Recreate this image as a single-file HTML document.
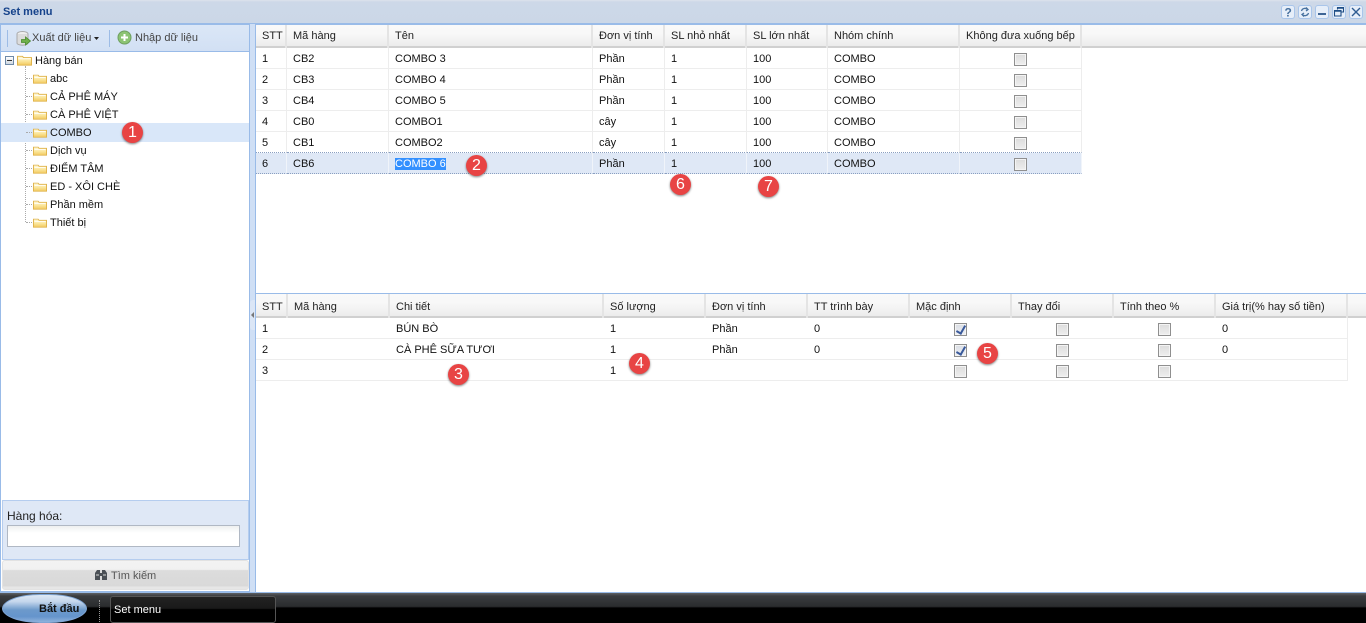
<!DOCTYPE html>
<html lang="vi"><head><meta charset="utf-8"><title>Set menu</title>
<style>
*{box-sizing:border-box}
html,body{margin:0;padding:0}
body{width:1366px;height:623px;position:relative;overflow:hidden;background:#dfe8f6;font:11px "Liberation Sans",Arial,sans-serif;color:#111}
.a{position:absolute}
.t{position:absolute;white-space:nowrap;line-height:14px}
#title{left:0;top:0;width:1366px;height:24px;background:linear-gradient(#dde3ec 0,#cdd8e8 2px,#cbd7e7 100%);border-bottom:1px solid #99bbe8}
#title b{position:absolute;left:3px;top:5px;font-size:11px;color:#15428b;line-height:14px}
.wb{position:absolute;top:5px;width:14px;height:14px;border:1px solid #a9c5ea;border-radius:3px;background:#e6eef9}
.wb svg{position:absolute;left:0;top:0}
#left{left:0;top:24px;width:250px;height:568px;border:1px solid #99bbe8;background:#fff}
#tb{left:0;top:0;width:248px;height:27px;background:linear-gradient(#dbe7f7,#d2e0f4);border-bottom:1px solid #99bbe8}
.sep{position:absolute;top:5px;width:1px;height:17px;background:#9dbce6}
#tree{left:0;top:27px;width:248px;height:448px;background:#fff}
.row{position:absolute;left:0;width:248px;height:18px}
.row.s{background:#d9e7f9;box-shadow:0 -1px 0 #d9e7f9}
.row span{position:absolute;left:49px;top:2px;line-height:14px;font-size:11px}
.fo{position:absolute;left:32px;top:4px}
.dot{position:absolute;border-left:1px dotted #aaa}
.doth{position:absolute;left:25px;top:8px;width:8px;border-top:1px dotted #aaa}
#search{left:1px;top:475px;width:247px;height:60px;background:#dfe8f6;border:1px solid #b5cdef;position:absolute}
#search label{position:absolute;left:4px;top:8px;font-size:12px;line-height:14px;color:#222}
#search i{position:absolute;left:4px;top:24px;width:233px;height:22px;background:linear-gradient(#eef0f0,#fff 7px);border:1px solid #b0b8c4}
#btn{left:1px;top:535px;width:247px;height:30px;border:1px solid #e2e2e2;border-radius:3px;background:linear-gradient(#f3f3f3 0,#f1f1f1 30%,#dcdcdc 34%,#d9d9d9 90%,#e6e6e6 92%,#e6e6e6 100%)}
#btn span{position:absolute;left:108px;top:8px;color:#555;line-height:14px}
#spl{left:250px;top:24px;width:6px;height:568px;background:#cfdff5}
#r1{left:255px;top:24px;width:1111px;height:269px;background:#fff;border-left:1px solid #99bbe8;border-top:1px solid #99bbe8}
#r2{left:255px;top:293px;width:1111px;height:299px;background:#fff;border:1px solid #99bbe8;border-right:0;border-bottom:0}
.hd{position:absolute;left:0;top:0;width:1110px;background:linear-gradient(#f9f9f9 0,#f8f8f8 40%,#ececec 100%);border-bottom:2px solid #d0d0d0}
table{position:absolute;left:0;top:0;border-collapse:separate;border-spacing:0;table-layout:fixed}
th,td{padding:0 0 0 6px;font-size:11px;font-weight:normal;text-align:left;white-space:nowrap;overflow:hidden;color:#111}
th{border-right:2px solid #e4e4e4;color:#222}
#r1 th{padding-bottom:2px}
#r2 th{padding-top:1px}
td{height:21px;padding-top:1px;border-right:1px solid #ededed;border-bottom:1px solid #ededed}
#r2 td{border-right:0}
#r2 td:last-child{border-right:1px solid #ededed}
td.c{padding:0}
tr.pre td{border-bottom:1px dotted #8a9fc0}
tr.sel td{background:#dfe8f6;border-bottom:1px dotted #8a9fc0;border-right-color:#f0f4fa}
.sl{background:#3390ff;color:#fff}
.cb{display:block;margin:0 auto;width:13px;height:13px;border:1px solid #8f8f8f;background:linear-gradient(#dcdcdc,#eeeeee);box-shadow:inset 0 0 0 1px #f4f4f4;position:relative;top:1px}
#r2 .cb{left:-1px}
.cb.k{background:linear-gradient(#d9dde4,#eef0f4)}
.cb.k::after{content:"";position:absolute;left:3px;top:0;width:4px;height:8px;border:solid #3a5a9b;border-width:0 2px 2px 0;transform:rotate(30deg)}
.n{position:absolute;width:21px;height:21px;border-radius:50%;background:#e84444;color:#fff;text-align:center;font-size:16px;line-height:21px;box-shadow:0 1px 2px rgba(0,0,0,.5);z-index:5}
#bar{left:0;top:592px;width:1366px;height:31px;border-top:1px solid #99bbe8;background:linear-gradient(#5e6165 0,#3a3c3f 10%,#2a2c2e 45%,#000 50%,#000 100%)}
#st{left:2px;top:1px;width:85px;height:29px;border-radius:42px/16px;border:1px solid #7fa5d4;background:linear-gradient(#dfe9f5 0,#c4d6ec 25%,#6d9acb 55%,#6594cc 80%,#8eb2dc 100%)}
#st span{position:absolute;left:36px;top:7px;font-weight:bold;color:#111;line-height:14px}
#tk{left:110px;top:3px;width:166px;height:27px;border:1px solid #555;border-radius:3px;background:linear-gradient(#222 0,#1a1a1a 45%,#000 50%);color:#fff}
#tk span{position:absolute;left:3px;top:6px;line-height:14px}
#gr{left:99px;top:7px;width:1px;height:22px;border-left:1px dotted #999}
</style></head><body>
<svg width="0" height="0" style="position:absolute"><defs><linearGradient id="fg" x1="0" y1="0" x2="0" y2="1"><stop offset="0" stop-color="#fffbe0"/><stop offset=".5" stop-color="#fbe79f"/><stop offset="1" stop-color="#f2c95e"/></linearGradient>
<symbol id="fold" viewBox="0 0 15 13" preserveAspectRatio="none"><path d="M.5 1.500h5l1 1.500h8v9H.5z" fill="url(#fg)" stroke="#dfb24a"/><path d="M1.500 4.500h12" stroke="#fff"/></symbol></defs></svg>

<div id="title" class="a"><b>Set menu</b>
<div class="wb" style="left:1281px"><svg width="12" height="12"><text x="2.500" y="10.500" font-family="Liberation Sans" font-size="12" font-weight="bold" fill="#47719f">?</text></svg></div>
<div class="wb" style="left:1298px"><svg width="12" height="12"><path d="M2.500 5a3.500 3.500 0 0 1 6-1.500M9.500 7a3.500 3.500 0 0 1-6 1.500M7 1.500l2 2-2 1.500M5 7L3 8.500l2 2" fill="none" stroke="#47719f" stroke-width="1.300"/></svg></div>
<div class="wb" style="left:1315px"><svg width="12" height="12"><path d="M2 8h8" stroke="#3d6596" stroke-width="2"/></svg></div>
<div class="wb" style="left:1332px"><svg width="12" height="12"><path d="M4.500 3.500V1.500h6v4.500H8M1.500 4.500h6.500v5.500H1.500z" fill="none" stroke="#1f4e86" stroke-width="1.100"/><path d="M1.500 5h6.500M4.500 2h6" stroke="#1f4e86" stroke-width="1.400"/></svg></div>
<div class="wb" style="left:1349px"><svg width="12" height="12"><path d="M2 2l8 8M10 2l-8 8" stroke="#2f5c92" stroke-width="1.400"/></svg></div>
</div>

<div id="left" class="a">
 <div id="tb" class="a">
  <div class="sep" style="left:6px"></div>
  <svg class="a" style="left:15px;top:6px" width="16" height="15"><ellipse cx="6.500" cy="3" rx="5.500" ry="2.500" fill="#eee" stroke="#aaa"/><path d="M1 3v9c0 1.300 2.500 2.200 5.500 2.200S12 13.300 12 12V3" fill="#dcdcdc" stroke="#aaa"/><path d="M5.500 8.500h4V6l5 4-5 4v-2.500h-4z" fill="#6fb04a" stroke="#4a8a2c" stroke-width=".8"/></svg>
  <span class="t" style="left:31px;top:6px;color:#444">Xuất dữ liệu</span>
  <svg class="a" style="left:93px;top:12px" width="6" height="4"><path d="M0 0h5L2.500 3z" fill="#222"/></svg>
  <div class="sep" style="left:108px"></div>
  <svg class="a" style="left:116px;top:5px" width="15" height="15"><circle cx="7.500" cy="7.500" r="6.500" fill="#8cc474" stroke="#6e9f60"/><path d="M7.500 4v7M4 7.500h7" stroke="#fff" stroke-width="2"/></svg>
  <span class="t" style="left:134px;top:6px;color:#444">Nhập dữ liệu</span>
 </div>
 <div id="tree" class="a">
  <div class="dot" style="left:24px;top:14px;height:156px"></div>
  <div class="a" style="left:4px;top:4px;width:9px;height:9px;border:1px solid #6e8aa8;background:linear-gradient(#fff,#cfd8e2)"><div class="a" style="left:1px;top:3px;width:5px;height:1px;background:#333"></div></div>
  <svg class="a" style="left:16px;top:3px" width="15" height="11"><use href="#fold" width="15" height="11"/></svg>
  <span class="t" style="left:34px;top:2px">Hàng bán</span>

  <div class="row" style="top:18px"><div class="doth"></div><svg class="fo" width="14" height="10"><use href="#fold" width="14" height="10"/></svg><span>abc</span></div>
  <div class="row" style="top:36px"><div class="doth"></div><svg class="fo" width="14" height="10"><use href="#fold" width="14" height="10"/></svg><span>CẢ PHÊ MÁY</span></div>
  <div class="row" style="top:54px"><div class="doth"></div><svg class="fo" width="14" height="10"><use href="#fold" width="14" height="10"/></svg><span>CÀ PHÊ VIỆT</span></div>
  <div class="row s" style="top:72px"><div class="doth"></div><svg class="fo" width="14" height="10"><use href="#fold" width="14" height="10"/></svg><span>COMBO</span></div>
  <div class="row" style="top:90px"><div class="doth"></div><svg class="fo" width="14" height="10"><use href="#fold" width="14" height="10"/></svg><span>Dịch vụ</span></div>
  <div class="row" style="top:108px"><div class="doth"></div><svg class="fo" width="14" height="10"><use href="#fold" width="14" height="10"/></svg><span>ĐIỂM TÂM</span></div>
  <div class="row" style="top:126px"><div class="doth"></div><svg class="fo" width="14" height="10"><use href="#fold" width="14" height="10"/></svg><span>ED - XÔI CHÈ</span></div>
  <div class="row" style="top:144px"><div class="doth"></div><svg class="fo" width="14" height="10"><use href="#fold" width="14" height="10"/></svg><span>Phần mềm</span></div>
  <div class="row" style="top:162px"><div class="doth"></div><svg class="fo" width="14" height="10"><use href="#fold" width="14" height="10"/></svg><span>Thiết bị</span></div>
 </div>
 <div id="search"><label>Hàng hóa:</label><i></i></div>
 <div id="btn" class="a">
  <svg class="a" style="left:91px;top:7px" width="14" height="13"><path d="M1 5l2-3h3v3h2V2h3l2 3v7H8V8H6v4H1z" fill="#4a4f55"/><path d="M2 7h3M9 7h3" stroke="#d8d8d8"/></svg>
  <span>Tìm kiếm</span>
 </div>
</div>

<div id="spl" class="a"></div>
<div class="a" style="left:250px;top:300px;width:5px;height:30px;background:#dbe6f6;border-radius:3px 0 0 3px"></div>
<svg class="a" style="left:251px;top:312px" width="4" height="6"><path d="M3 0v6L0 3z" fill="#777"/></svg>

<div id="r1" class="a">
 <div class="hd" style="height:23px"></div>
 <table style="width:826px"><colgroup><col style="width:31px"><col style="width:102px"><col style="width:204px"><col style="width:72px"><col style="width:82px"><col style="width:81px"><col style="width:132px"><col style="width:122px"></colgroup>
 <tr style="height:23px"><th>STT</th><th>Mã hàng</th><th>Tên</th><th>Đơn vị tính</th><th>SL nhỏ nhất</th><th>SL lớn nhất</th><th>Nhóm chính</th><th>Không đưa xuống bếp</th></tr>
 <tr><td>1</td><td>CB2</td><td>COMBO 3</td><td>Phần</td><td>1</td><td>100</td><td>COMBO</td><td class="c"><i class="cb"></i></td></tr>
 <tr><td>2</td><td>CB3</td><td>COMBO 4</td><td>Phần</td><td>1</td><td>100</td><td>COMBO</td><td class="c"><i class="cb"></i></td></tr>
 <tr><td>3</td><td>CB4</td><td>COMBO 5</td><td>Phần</td><td>1</td><td>100</td><td>COMBO</td><td class="c"><i class="cb"></i></td></tr>
 <tr><td>4</td><td>CB0</td><td>COMBO1</td><td>cây</td><td>1</td><td>100</td><td>COMBO</td><td class="c"><i class="cb"></i></td></tr>
 <tr class="pre"><td>5</td><td>CB1</td><td>COMBO2</td><td>cây</td><td>1</td><td>100</td><td>COMBO</td><td class="c"><i class="cb"></i></td></tr>
 <tr class="sel"><td>6</td><td>CB6</td><td><span class="sl">COMBO 6</span></td><td>Phần</td><td>1</td><td>100</td><td>COMBO</td><td class="c"><i class="cb"></i></td></tr>
 </table>
</div>

<div id="r2" class="a">
 <div class="hd" style="height:24px"></div>
 <table style="width:1092px"><colgroup><col style="width:32px"><col style="width:102px"><col style="width:214px"><col style="width:102px"><col style="width:102px"><col style="width:102px"><col style="width:102px"><col style="width:102px"><col style="width:102px"><col style="width:132px"></colgroup>
 <tr style="height:24px"><th>STT</th><th>Mã hàng</th><th>Chi tiết</th><th>Số lượng</th><th>Đơn vị tính</th><th>TT trình bày</th><th>Mặc định</th><th>Thay đổi</th><th>Tính theo %</th><th>Giá trị(% hay số tiền)</th></tr>
 <tr><td>1</td><td></td><td>BÚN BÒ</td><td>1</td><td>Phần</td><td>0</td><td class="c"><i class="cb k"></i></td><td class="c"><i class="cb"></i></td><td class="c"><i class="cb"></i></td><td>0</td></tr>
 <tr><td>2</td><td></td><td>CÀ PHÊ SỮA TƯƠI</td><td>1</td><td>Phần</td><td>0</td><td class="c"><i class="cb k"></i></td><td class="c"><i class="cb"></i></td><td class="c"><i class="cb"></i></td><td>0</td></tr>
 <tr><td>3</td><td></td><td></td><td>1</td><td></td><td></td><td class="c"><i class="cb"></i></td><td class="c"><i class="cb"></i></td><td class="c"><i class="cb"></i></td><td></td></tr>
 </table>
</div>

<div class="n" style="left:122px;top:122px">1</div>
<div class="n" style="left:466px;top:155px">2</div>
<div class="n" style="left:448px;top:364px">3</div>
<div class="n" style="left:629px;top:353px">4</div>
<div class="n" style="left:977px;top:343px">5</div>
<div class="n" style="left:670px;top:174px">6</div>
<div class="n" style="left:758px;top:176px">7</div>

<div id="bar" class="a">
 <div id="st" class="a"><span>Bắt đầu</span></div>
 <div id="gr" class="a"></div>
 <div id="tk" class="a"><span>Set menu</span></div>
</div>
</body></html>
